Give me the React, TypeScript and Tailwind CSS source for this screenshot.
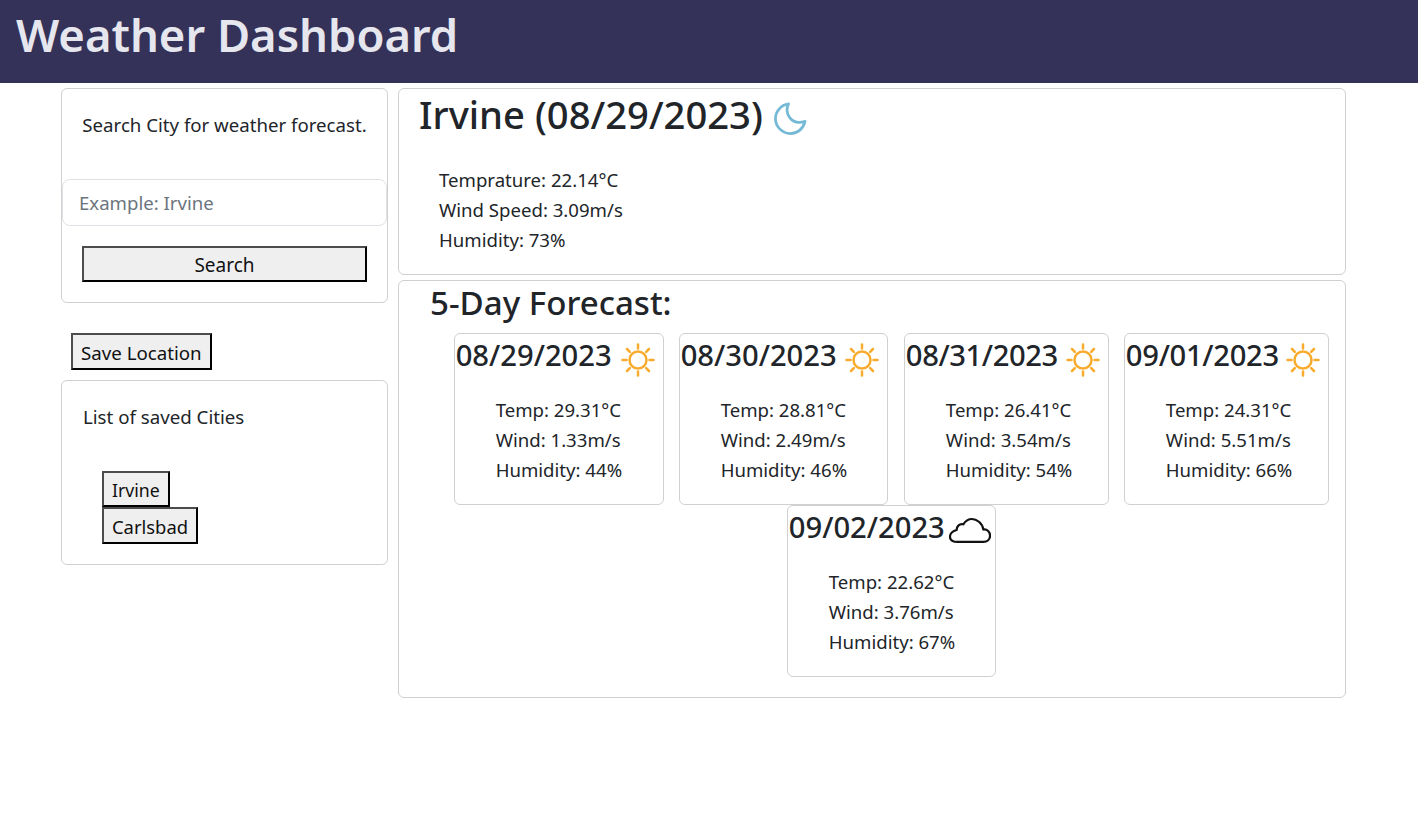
import type { ReactNode } from 'react'

const font = 'font-["Noto_Sans",_"Open_Sans",sans-serif]'

function Sun() {
  return (
    <svg viewBox="0 0 34 34" className="w-[34px] h-[34px] shrink-0 text-[#f9ab2d]" fill="none" stroke="currentColor" strokeWidth="2.5" strokeLinecap="round">
      <circle cx="17" cy="17" r="8.5" />
      <path d="M17 1.5v4M17 28.5v4M1.5 17h4M28.5 17h4M6 6l2.8 2.8M25.2 25.2l2.8 2.8M28 6l-2.8 2.8M8.8 25.2L6 28" />
    </svg>
  )
}

function Cloud() {
  return (
    <svg viewBox="0 0 44 28" className="w-[42px] h-[28px] shrink-0 text-[#111] -mt-[4px] -mr-[4px]" fill="none" stroke="currentColor" strokeWidth="2.3" strokeLinejoin="round">
      <path d="M9 26.5H36C40 26.5 43 24 43 20C43 16 40 13 36 13.5C35 7 29 2 23 2.5C19 3 17 5 15 8C11 7 8 10 8 14C4 15 1 18 1 21C1 25 5 26.5 9 26.5Z" />
    </svg>
  )
}

function Moon() {
  return (
    <svg viewBox="0 0 34 34" className="w-[33px] h-[33px] shrink-0 text-[#74b9d6]" fill="none" stroke="currentColor" strokeWidth="2.8" strokeLinejoin="round">
      <path d="M15 2C10 10 17 25 32 20C30 28 24 32.5 17 32.5C8 32.5 1.5 25 1.5 17C1.5 10 7 3 15 2Z" />
    </svg>
  )
}

function OutsetButton({ className, children }: { className?: string; children: ReactNode }) {
  return (
    <button className={`block border-2 border-t-[#4c4c4c] border-l-[#4c4c4c] border-r-black border-b-black bg-[#efefef] text-[#111] px-2 leading-[30px] ${className ?? ''}`}>
      {children}
    </button>
  )
}

const days = [
  { date: '08/29/2023', temp: '29.31', wind: '1.33', hum: '44', w: 'w-[210px]', track: '', icon: <Sun /> },
  { date: '08/30/2023', temp: '28.81', wind: '2.49', hum: '46', w: 'w-[209.4px] mr-[0.8px]', track: '', icon: <Sun /> },
  { date: '08/31/2023', temp: '26.41', wind: '3.54', hum: '54', w: 'w-[205px]', track: 'tracking-[-0.4px]', icon: <Sun /> },
  { date: '09/01/2023', temp: '24.31', wind: '5.51', hum: '66', w: 'w-[205px]', track: 'tracking-[-0.3px]', icon: <Sun /> },
  { date: '09/02/2023', temp: '22.62', wind: '3.76', hum: '67', w: 'w-[209px]', track: '', icon: <Cloud /> },
]

export default function App() {
  return (
    <div className={`min-h-screen bg-white text-[#212529] ${font}`}>
      <header className="h-[83px] bg-[#343259] pl-4 pt-[1px]">
        <h1 className="text-[45.4px] leading-[66px] font-semibold text-[#e6e6ee]">Weather Dashboard</h1>
      </header>

      <main className="flex gap-[10px] pl-[61px] pt-[5px]">
        {/* Sidebar */}
        <aside className="w-[327px]">
          <div className="h-[215px] border border-[#d0d0d1] rounded-md">
            <p className="pt-[21px] text-center text-[18.65px] leading-[30px]">Search City for weather forecast.</p>
            <input
              placeholder="Example: Irvine"
              className="block w-[325px] h-[47px] mt-[39px] border border-[#dee2e6] rounded-lg px-4 text-[18.6px] placeholder:text-[#6c757d]"
            />
            <OutsetButton className="w-[285px] h-[36px] mx-auto mt-[20px] pt-[1px] text-[19px]">Search</OutsetButton>
          </div>

          <OutsetButton className="ml-[10px] mt-[30px] h-[37px] pt-[3px] text-[18.7px]">Save Location</OutsetButton>

          <div className="h-[185px] mt-[10px] border border-[#d0d0d1] rounded-md">
            <p className="pl-[21px] pt-[21px] text-[18.7px] leading-[30px]">List of saved Cities</p>
            <div className="pl-[40px] pt-[39px]">
              <OutsetButton className="h-[36px] pt-[1px] text-[17.7px]">Irvine</OutsetButton>
              <OutsetButton className="h-[37px] pt-[3px] text-[18.4px]">Carlsbad</OutsetButton>
            </div>
          </div>
        </aside>

        {/* Weather */}
        <section className="w-[948px]">
          <div className="h-[187px] border border-[#d0d0d1] rounded-md">
            <div className="flex items-center pl-[20px] pt-[1px]">
              <h2 className="text-[38.2px] leading-[48px] font-medium">Irvine (08/29/2023)</h2>
              <span className="ml-[11px] mt-[9px]"><Moon /></span>
            </div>
            <div className="pl-[40px] pt-[27px] text-[18.6px] leading-[30px]">
              <p>Temprature: 22.14°C</p>
              <p>Wind Speed: 3.09m/s</p>
              <p>Humidity: 73%</p>
            </div>
          </div>

          <div className="h-[418px] mt-[5px] border border-[#d0d0d1] rounded-md">
            <h3 className="pl-[31px] text-[33.1px] leading-[44px] font-medium">5-Day Forecast:</h3>
            <div className="flex flex-wrap justify-center gap-x-[15px] pl-[38.5px] mt-[8px]">
              {days.map((d) => (
                <div key={d.date} className={`${d.w} h-[172px] border border-[#d0d0d1] rounded-md`}>
                  <div className="flex items-center justify-between pl-[1px] pr-[8px] pt-[5px] h-[42px]">
                    <span className={`text-[29.2px] leading-[36px] font-medium whitespace-nowrap -mt-[5px] ${d.track}`}>{d.date}</span>
                    <span className="mt-[5px]">{d.icon}</span>
                  </div>
                  <div className="pl-[41px] pt-[19px] text-[18.6px] leading-[30px]">
                    <p>Temp: {d.temp}°C</p>
                    <p>Wind: {d.wind}m/s</p>
                    <p>Humidity: {d.hum}%</p>
                  </div>
                </div>
              ))}
            </div>
          </div>
        </section>
      </main>
    </div>
  )
}
